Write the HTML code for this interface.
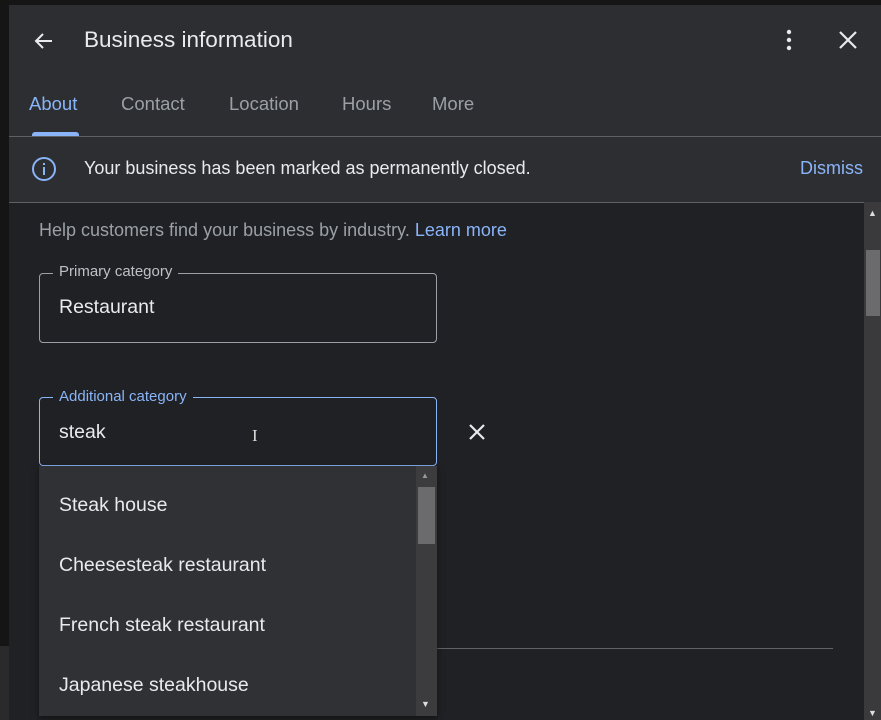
<!DOCTYPE html>
<html><head><style>
body{margin:0;width:881px;height:720px;background:#151516;overflow:hidden;position:relative;font-family:"Liberation Sans",sans-serif;}
.abs{position:absolute}
#dlg{left:9px;top:5px;width:872px;height:715px;background:#202124;}
#hdr{left:9px;top:5px;width:872px;height:131px;background:#2d2e31;}
#banner{left:9px;top:136px;width:872px;height:65px;background:#2d2e31;border-top:1px solid #5f6063;border-bottom:1px solid #5f6063;}
.t{color:#e8eaed;white-space:nowrap}
</style></head><body>
<div class="abs" style="left:0;top:646px;width:9px;height:74px;background:#2a2a2c"></div>
<div class="abs" id="dlg"></div>
<div class="abs" id="hdr"></div>
<svg class="abs" style="left:32px;top:29px" width="24" height="24" viewBox="0 0 24 24"><path d="M20 12H5M11 5l-7 7 7 7" stroke="#e8eaed" stroke-width="2" fill="none"/></svg>
<div class="abs t" style="left:84px;top:27px;font-size:22.5px">Business information</div>
<svg class="abs" style="left:780px;top:28px" width="18" height="24"><circle cx="9" cy="4" r="2.2" fill="#e8eaed"/><circle cx="9" cy="12" r="2.2" fill="#e8eaed"/><circle cx="9" cy="20" r="2.2" fill="#e8eaed"/></svg>
<svg class="abs" style="left:838px;top:30px" width="20" height="20"><path d="M2 2L18 18M18 2L2 18" stroke="#e8eaed" stroke-width="2.2"/></svg>
<div class="abs" style="left:29px;top:93px;font-size:18.5px;color:#8ab4f8">About</div>
<div class="abs" style="left:121px;top:93px;font-size:18.5px;color:#9aa0a6">Contact</div>
<div class="abs" style="left:229px;top:93px;font-size:18.5px;color:#9aa0a6">Location</div>
<div class="abs" style="left:342px;top:93px;font-size:18.5px;color:#9aa0a6">Hours</div>
<div class="abs" style="left:432px;top:93px;font-size:18.5px;color:#9aa0a6">More</div>
<div class="abs" style="left:32px;top:132px;width:47px;height:4px;background:#8ab4f8;border-radius:3px 3px 0 0"></div>
<div class="abs" id="banner"></div>
<svg class="abs" style="left:31px;top:156px" width="26" height="26" viewBox="0 0 26 26"><circle cx="13" cy="13" r="11" stroke="#8ab4f8" stroke-width="2" fill="none"/><rect x="12" y="11" width="2" height="8" fill="#8ab4f8"/><rect x="12" y="7" width="2" height="2" fill="#8ab4f8"/></svg>
<div class="abs t" style="left:84px;top:158px;font-size:18px">Your business has been marked as permanently closed.</div>
<div class="abs" style="left:800px;top:158px;font-size:18px;color:#8ab4f8">Dismiss</div>
<div class="abs" style="left:864px;top:202px;width:17px;height:518px;background:#3a3a3c"></div>
<div class="abs" style="left:866px;top:250px;width:14px;height:66px;background:#6b6b6d"></div>
<div class="abs" style="left:868px;top:208px;font-size:9px;color:#ddd">▲</div>
<div class="abs" style="left:868px;top:708px;font-size:9px;color:#ddd">▼</div>
<div class="abs" style="left:39px;top:220px;font-size:18px;color:#9aa0a6;white-space:nowrap">Help customers find your business by industry. <span style="color:#8ab4f8">Learn more</span></div>
<div class="abs" style="left:39px;top:273px;width:396px;height:68px;border:1px solid #9aa0a6;border-radius:4px"></div>
<div class="abs" style="left:53px;top:263px;padding:0 6px;background:#202124;font-size:15px;color:#bdc1c6">Primary category</div>
<div class="abs t" style="left:59px;top:296px;font-size:19.5px">Restaurant</div>
<div class="abs" style="left:39px;top:397px;width:396px;height:67px;border:1.5px solid #8ab4f8;border-radius:4px"></div>
<div class="abs" style="left:53px;top:388px;padding:0 6px;background:#202124;font-size:15px;color:#8ab4f8">Additional category</div>
<div class="abs t" style="left:59px;top:421px;font-size:19.5px">steak</div>
<div class="abs" style="left:252px;top:426px;font-size:17px;color:#ddd;font-family:'Liberation Serif',serif">I</div>
<svg class="abs" style="left:468px;top:423px" width="18" height="18"><path d="M2 2L16 16M16 2L2 16" stroke="#e8eaed" stroke-width="2.2"/></svg>
<div class="abs" style="left:437px;top:648px;width:396px;height:1px;background:#5f6368"></div>
<div class="abs" style="left:39px;top:466px;width:398px;height:250px;background:#303134;box-shadow:0 2px 6px rgba(0,0,0,.5)"></div>
<div class="abs" style="left:416px;top:466px;width:21px;height:250px;background:#3c3c3e"></div>
<div class="abs" style="left:418px;top:487px;width:17px;height:57px;background:#6b6b6d"></div>
<div class="abs" style="left:421px;top:471px;font-size:8px;color:#999">▲</div>
<div class="abs" style="left:421px;top:699px;font-size:9px;color:#ddd">▼</div>
<div class="abs t" style="left:59px;top:494px;font-size:19.5px">Steak house</div>
<div class="abs t" style="left:59px;top:554px;font-size:19.5px">Cheesesteak restaurant</div>
<div class="abs t" style="left:59px;top:614px;font-size:19.5px">French steak restaurant</div>
<div class="abs t" style="left:59px;top:674px;font-size:19.5px">Japanese steakhouse</div>
</body></html>
